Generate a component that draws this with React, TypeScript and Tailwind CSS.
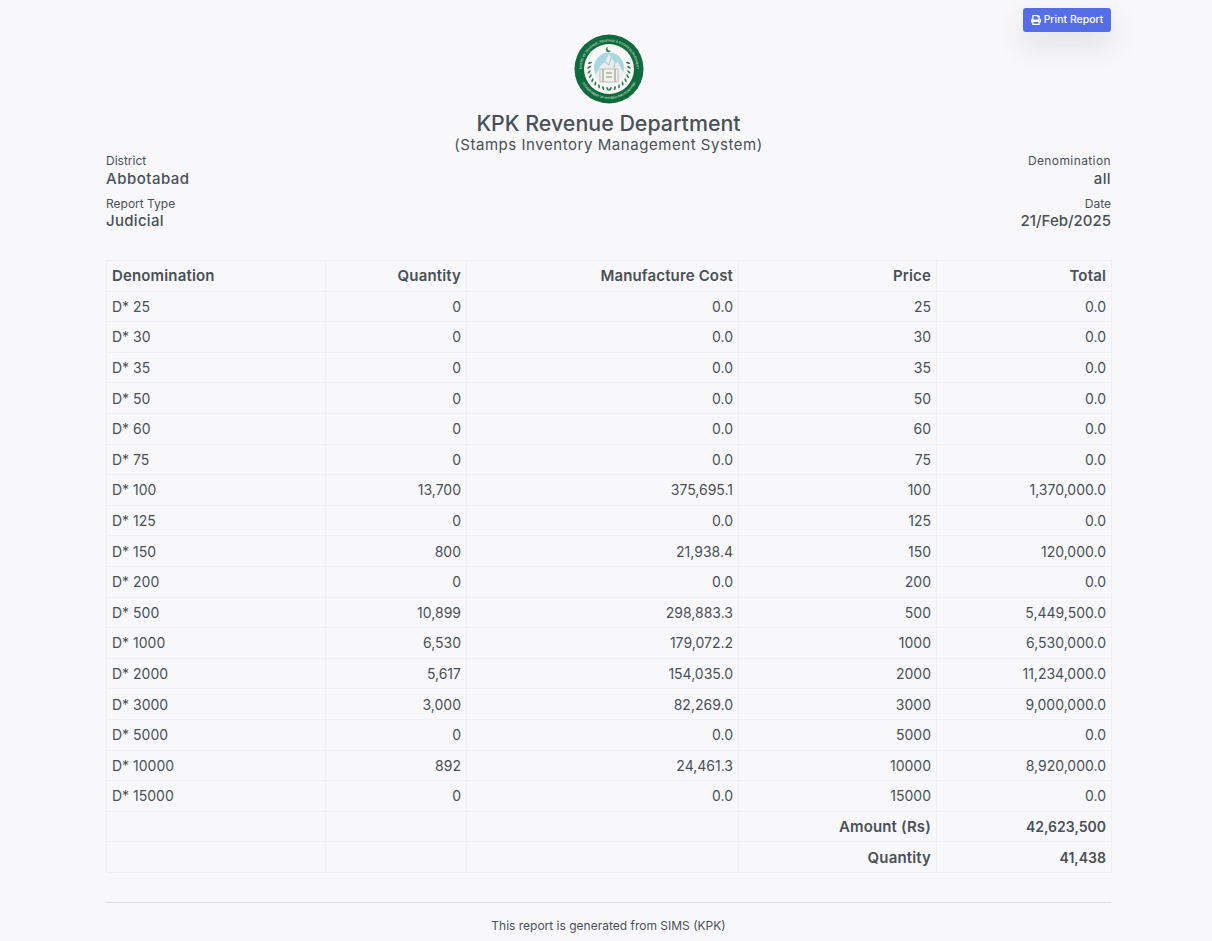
import React from "react";
import { FaPrint } from "react-icons/fa";

const rows = [
  ["D* 25", "0", "0.0", "25", "0.0"],
  ["D* 30", "0", "0.0", "30", "0.0"],
  ["D* 35", "0", "0.0", "35", "0.0"],
  ["D* 50", "0", "0.0", "50", "0.0"],
  ["D* 60", "0", "0.0", "60", "0.0"],
  ["D* 75", "0", "0.0", "75", "0.0"],
  ["D* 100", "13,700", "375,695.1", "100", "1,370,000.0"],
  ["D* 125", "0", "0.0", "125", "0.0"],
  ["D* 150", "800", "21,938.4", "150", "120,000.0"],
  ["D* 200", "0", "0.0", "200", "0.0"],
  ["D* 500", "10,899", "298,883.3", "500", "5,449,500.0"],
  ["D* 1000", "6,530", "179,072.2", "1000", "6,530,000.0"],
  ["D* 2000", "5,617", "154,035.0", "2000", "11,234,000.0"],
  ["D* 3000", "3,000", "82,269.0", "3000", "9,000,000.0"],
  ["D* 5000", "0", "0.0", "5000", "0.0"],
  ["D* 10000", "892", "24,461.3", "10000", "8,920,000.0"],
  ["D* 15000", "0", "0.0", "15000", "0.0"],
];

const cell = "border border-[#eff0f5] px-[5px] py-[4.3px] text-right leading-[21px]";
const headCell = cell + " font-semibold text-[15px] tracking-[0.15px]";

const leaves = Array.from({ length: 9 }, (_, i) => 72 + i * 13);

// seal from the report header
const Logo = () => (
  <svg viewBox="0 0 70 70" className="w-[70px] h-[70px]">
    <defs>
      <path id="sealTop" d="M12.47 50.77 A27.5 27.5 0 1 1 57.53 50.77" />
      <path id="sealBottom" d="M5 35 A30 30 0 0 0 65 35" />
    </defs>
    <circle cx="35" cy="35" r="34.5" fill="#0f6b3c" />
    <circle cx="35" cy="35" r="25" fill="#f7f8f5" />
    <text fontSize="3.1" fill="#e6f0e6" fontFamily="Liberation Sans, sans-serif" textAnchor="middle">
      <textPath href="#sealTop" startOffset="50%">BOARD OF REVENUE, REVENUE & ESTATE DEPARTMENT</textPath>
    </text>
    <text fontSize="3.1" fill="#e6f0e6" fontFamily="Liberation Sans, sans-serif" textAnchor="middle">
      <textPath href="#sealBottom" startOffset="50%">GOVERNMENT OF KHYBER PAKHTUNKHWA</textPath>
    </text>
    <circle cx="35" cy="33.5" r="15" fill="#a9d6e3" />
    <path d="M21 42 L27 31 L31 28 L35 20 L37 24 L41 29 L44 28 L50 40 L44 48 L26 48 Z" fill="#e9eeee" />
    <path d="M31 28 L35 31 L37 24 M41 29 L40 34" fill="none" stroke="#8a9c9a" strokeWidth="0.6" />
    <rect x="26" y="35" width="18" height="13" fill="#f3f2ea" stroke="#8b968c" strokeWidth="0.5" />
    <path d="M29 35v13M41 35v13M32 39h6M32 43h6" stroke="#7b877d" strokeWidth="0.9" />
    {leaves.map((a) => {
      const r = (a * Math.PI) / 180;
      const dx = 20 * Math.sin(r);
      const y = 35 - 20 * Math.cos(r);
      return (
        <g key={a}>
          <ellipse cx={35 + dx} cy={y} rx="0.9" ry="2.1" fill="#2b7d4e" transform={`rotate(${a + 35} ${35 + dx} ${y})`} />
          <ellipse cx={35 - dx} cy={y} rx="0.9" ry="2.1" fill="#2b7d4e" transform={`rotate(${-a - 35} ${35 - dx} ${y})`} />
        </g>
      );
    })}
    <path d="M34 13 a2.6 2.6 0 1 0 3 3 a2.1 2.1 0 1 1 -3 -3" fill="#27794a" />
  </svg>
);

export default function App() {
  return (
    <div className="min-h-[941px] bg-[#f8f8fb] pl-[106px] pr-[101px] pt-2 text-[#495057] font-['Inter','Liberation_Sans',sans-serif]">
      <div className="flex justify-end">
        <button className="flex items-center gap-[3px] h-6 w-[88px] justify-center rounded-[3px] bg-[#556ee6] text-white text-[10.5px] font-medium shadow-[0_12px_30px_rgba(60,60,80,0.14)]">
          <FaPrint className="text-[10px]" />
          Print Report
        </button>
      </div>

      <div className="flex flex-col items-center mt-[2px]">
        <Logo />
        <h1 className="text-[21.4px] font-medium leading-[25px] mt-[7px]">KPK Revenue Department</h1>
        <h2 className="text-[15px] font-normal leading-[17px] tracking-[0.55px]">(Stamps Inventory Management System)</h2>
      </div>

      <div className="flex justify-between mt-[-1px]">
        <div>
          <div className="text-[12px] leading-[17px]">District</div>
          <div className="text-[15px] font-medium leading-[19px] tracking-[0.5px]">Abbotabad</div>
          <div className="text-[12px] leading-[17px] mt-[7px]">Report Type</div>
          <div className="text-[15px] font-medium leading-[18px] tracking-[0.3px]">Judicial</div>
        </div>
        <div className="text-right">
          <div className="text-[12px] leading-[17px] tracking-[0.4px]">Denomination</div>
          <div className="text-[15px] font-medium leading-[19px] tracking-[0.4px]">all</div>
          <div className="text-[12px] leading-[17px] mt-[7px]">Date</div>
          <div className="text-[15px] font-medium leading-[18px]">21/Feb/2025</div>
        </div>
      </div>

      <table className="w-[1005px] mt-[30px] border-collapse table-fixed text-[14px]">
        <colgroup>
          <col className="w-[219px]" />
          <col className="w-[141px]" />
          <col className="w-[272px]" />
          <col className="w-[198px]" />
          <col className="w-[175px]" />
        </colgroup>
        <thead>
          <tr>
            <th className={headCell + " !text-left"}>Denomination</th>
            <th className={headCell}>Quantity</th>
            <th className={headCell}>Manufacture Cost</th>
            <th className={headCell}>Price</th>
            <th className={headCell}>Total</th>
          </tr>
        </thead>
        <tbody>
          {rows.map((r) => (
            <tr key={r[0]}>
              <td className={cell + " !text-left"}>{r[0]}</td>
              <td className={cell}>{r[1]}</td>
              <td className={cell}>{r[2]}</td>
              <td className={cell}>{r[3]}</td>
              <td className={cell}>{r[4]}</td>
            </tr>
          ))}
          <tr>
            <td className={cell}></td>
            <td className={cell}></td>
            <td className={cell}></td>
            <td className={headCell}>Amount (Rs)</td>
            <td className={cell + " font-semibold"}>42,623,500</td>
          </tr>
          <tr>
            <td className={cell}></td>
            <td className={cell}></td>
            <td className={cell}></td>
            <td className={headCell}>Quantity</td>
            <td className={cell + " font-semibold"}>41,438</td>
          </tr>
        </tbody>
      </table>

      <div className="mt-[29px] border-t border-[#dcdde3] pt-[14px] text-center text-[12px] leading-[18px]">
        This report is generated from SIMS (KPK)
      </div>
    </div>
  );
}
